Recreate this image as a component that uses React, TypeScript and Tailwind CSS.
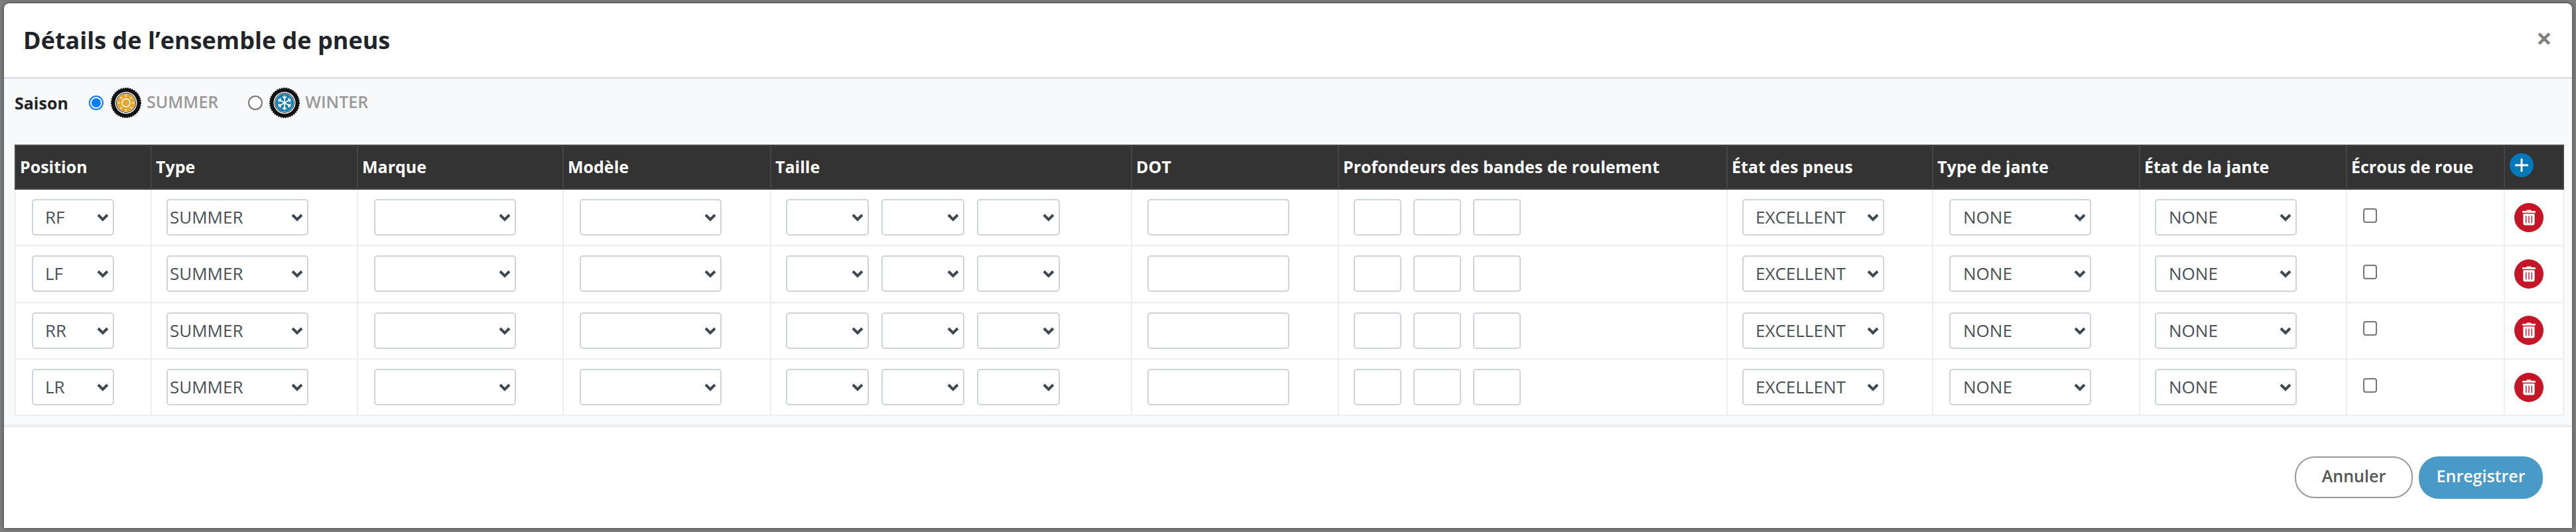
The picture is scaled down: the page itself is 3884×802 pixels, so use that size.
import React from 'react';
import { FaTrashAlt } from 'react-icons/fa';

const columns = [
  { label: 'Position', width: 'w-[205px]' },
  { label: 'Type', width: 'w-[311px]' },
  { label: 'Marque', width: 'w-[310px]' },
  { label: 'Modèle', width: 'w-[313px]' },
  { label: 'Taille', width: 'w-[544px]' },
  { label: 'DOT', width: 'w-[312px]' },
  { label: 'Profondeurs des bandes de roulement', width: 'w-[586px]' },
  { label: 'État des pneus', width: 'w-[310px]' },
  { label: 'Type de jante', width: 'w-[312px]' },
  { label: 'État de la jante', width: 'w-[312px]' },
  { label: 'Écrous de roue', width: 'w-[238px]' },
];

const positions = ['RF', 'LF', 'RR', 'LR'];

function Select({ value = '', className = '' }: { value?: string; className?: string }) {
  return (
    <div className={`relative h-[55px] shrink-0 ${className}`}>
      <select
        defaultValue={value}
        className="h-full w-full appearance-none rounded-[5px] border-2 border-[#ced4da] bg-white text-[26px] text-[#495057] outline-none"
      >
        <option value={value}>{value}</option>
      </select>
      <svg
        viewBox="0 0 18 12"
        className="pointer-events-none absolute right-[8px] top-[22px] h-[12px] w-[18px]"
      >
        <path d="M2 2 L9 9 L16 2" fill="none" stroke="#3f4850" strokeWidth="4" />
      </svg>
    </div>
  );
}

function TextInput({ className = '' }: { className?: string }) {
  return (
    <input
      type="text"
      className={`h-[55px] shrink-0 rounded-[5px] border-2 border-[#ced4da] bg-white outline-none ${className}`}
    />
  );
}

function Tire({ children }: { children: React.ReactNode }) {
  return (
    <svg viewBox="0 0 46 46" className="h-[46px] w-[46px] shrink-0">
      <circle cx="23" cy="23" r="22" fill="#111" />
      <circle cx="23" cy="23" r="22" fill="none" stroke="#111" strokeWidth="2" strokeDasharray="2 1.5" />
      <circle cx="23" cy="23" r="16.5" fill="#fff" />
      <circle cx="23" cy="23" r="15" fill="#111" />
      <circle cx="23" cy="23" r="14" fill="#fff" />
      {children}
    </svg>
  );
}

function SunTire() {
  const rays = [0, 45, 90, 135, 180, 225, 270, 315];
  return (
    <Tire>
      <circle cx="23" cy="23" r="13.5" fill="#e6a52b" />
      <circle cx="23" cy="23" r="6" fill="none" stroke="#fff" strokeWidth="1.6" />
      {rays.map((deg) => (
        <line
          key={deg}
          x1="23"
          y1="14"
          x2="23"
          y2="11"
          stroke="#fff"
          strokeWidth="1.6"
          transform={`rotate(${deg} 23 23)`}
        />
      ))}
    </Tire>
  );
}

function SnowTire() {
  const arms = [0, 60, 120, 180, 240, 300];
  return (
    <Tire>
      <circle cx="23" cy="23" r="13.5" fill="#0f7fb8" />
      {arms.map((deg) => (
        <g key={deg} transform={`rotate(${deg} 23 23)`} stroke="#fff" strokeWidth="1.7" fill="none">
          <line x1="23" y1="23" x2="23" y2="12" />
          <path d="M20 13.5 L23 16.5 L26 13.5" />
        </g>
      ))}
    </Tire>
  );
}

function Radio({ checked }: { checked?: boolean }) {
  return checked ? (
    <span className="flex h-[22px] w-[22px] shrink-0 items-center justify-center rounded-full border-2 border-[#0a7cff] bg-white">
      <span className="h-[14px] w-[14px] rounded-full bg-[#0a7cff]" />
    </span>
  ) : (
    <span className="h-[22px] w-[22px] shrink-0 rounded-full border-2 border-[#767676] bg-white" />
  );
}

function TireRow({ position }: { position: string }) {
  const cell = 'border-2 border-[#eeeeee] p-0 align-middle';
  return (
    <tr className="h-[85.33px]">
      <td className={`${cell} pl-[24px]`}>
        <Select value={position} className="w-[124px] [&_select]:pl-[18px]" />
      </td>
      <td className={`${cell} pl-[22px]`}>
        <Select value="SUMMER" className="w-[214px] [&_select]:pl-[3px]" />
      </td>
      <td className={`${cell} pl-[24px]`}>
        <Select className="w-[214px]" />
      </td>
      <td className={`${cell} pl-[24px]`}>
        <Select className="w-[214px]" />
      </td>
      <td className={`${cell} pl-[22px]`}>
        <div className="flex gap-[19px]">
          <Select className="w-[125px]" />
          <Select className="w-[125px]" />
          <Select className="w-[125px]" />
        </div>
      </td>
      <td className={`${cell} pl-[23px]`}>
        <TextInput className="w-[214px]" />
      </td>
      <td className={`${cell} pl-[22px]`}>
        <div className="flex gap-[18px]">
          <TextInput className="w-[72px]" />
          <TextInput className="w-[72px]" />
          <TextInput className="w-[72px]" />
        </div>
      </td>
      <td className={`${cell} pl-[22px]`}>
        <Select value="EXCELLENT" className="w-[214px] [&_select]:pl-[18px]" />
      </td>
      <td className={`${cell} pl-[24px]`}>
        <Select value="NONE" className="w-[214px] [&_select]:pl-[19px]" />
      </td>
      <td className={`${cell} pl-[22px]`}>
        <Select value="NONE" className="w-[214px] [&_select]:pl-[19px]" />
      </td>
      <td className={`${cell} pl-[24px]`}>
        <input
          type="checkbox"
          className="mb-[6px] block h-[22px] w-[21px] appearance-none rounded-[4px] border-2 border-[#767676] bg-white"
        />
      </td>
      <td className={`${cell} pl-[14px]`}>
        <button className="flex h-[44px] w-[44px] items-center justify-center rounded-full bg-[#c41626] text-white">
          <FaTrashAlt className="h-[24px] w-[20px]" />
        </button>
      </td>
    </tr>
  );
}

export default function App() {
  return (
    <div className="flex h-[802px] w-[3884px] bg-[#7f7f7f] pb-[6px] pl-[6px] pr-[6px] pt-[5px] font-['Open_Sans',sans-serif]">
      <div className="flex w-full flex-col overflow-hidden rounded-tl-[8px] rounded-tr-[8px] bg-white shadow-[0_0_6px_rgba(0,0,0,0.5)]">
        {/* 헤더 */}
        <div className="flex h-[114px] shrink-0 items-center justify-between border-b-[3px] border-[#dee2e6] pl-[29px] pr-[30px]">
          <h2 className="text-[36px] font-bold leading-none text-[#212529]">Détails de l’ensemble de pneus</h2>
          <button className="mb-[8px] text-[42px] font-bold leading-none text-[#808080]">×</button>
        </div>

        {/* 본문 */}
        <div className="flex-1 bg-[#f8f9fa] pl-[16px] pr-[14px]">
          <div className="flex h-[99px] items-center pb-[27px] text-[25px] leading-none">
            <span className="w-[112px] font-bold text-[#212529]">Saison</span>
            <label className="flex items-center">
              <Radio checked />
              <span className="ml-[11px]">
                <SunTire />
              </span>
              <span className="ml-[8px] mb-[4px] font-semibold text-[#999999]">SUMMER</span>
            </label>
            <label className="ml-[45px] flex items-center">
              <Radio />
              <span className="ml-[10px]">
                <SnowTire />
              </span>
              <span className="ml-[8px] mb-[4px] font-semibold text-[#999999]">WINTER</span>
            </label>
          </div>

          <table className="w-[3842px] table-fixed border-collapse bg-white">
            <thead>
              <tr className="h-[66px] bg-[#333333] text-white">
                {columns.map((col) => (
                  <th
                    key={col.label}
                    className={`${col.width} border-2 border-[#454545] pl-[6px] text-left text-[25px] font-bold`}
                  >
                    {col.label}
                  </th>
                ))}
                <th className="w-[89px] border-2 border-[#454545] pb-[6px] pl-[7px] text-left">
                  <span className="flex h-[36px] w-[36px] items-center justify-center rounded-full bg-[#0079ba]">
                    <svg viewBox="0 0 20 20" className="h-[20px] w-[20px]">
                      <path d="M10 1 V19 M1 10 H19" stroke="#fff" strokeWidth="3" strokeLinecap="round" />
                    </svg>
                  </span>
                </th>
              </tr>
            </thead>
            <tbody>
              {positions.map((p) => (
                <TireRow key={p} position={p} />
              ))}
            </tbody>
          </table>
        </div>

        {/* 하단 버튼 */}
        <div className="flex h-[156px] shrink-0 items-start justify-end gap-[9px] border-t-[4px] border-[#eeeeee] pr-[44px] pt-[44px] text-[25px]">
          <button className="h-[63px] w-[178px] rounded-[30px] border-2 border-[#999999] bg-white pb-[4px] font-semibold text-[#555555]">
            Annuler
          </button>
          <button className="h-[64px] w-[187px] rounded-[30px] bg-[#4a9ac7] pb-[4px] font-semibold text-white">
            Enregistrer
          </button>
        </div>
      </div>
    </div>
  );
}
